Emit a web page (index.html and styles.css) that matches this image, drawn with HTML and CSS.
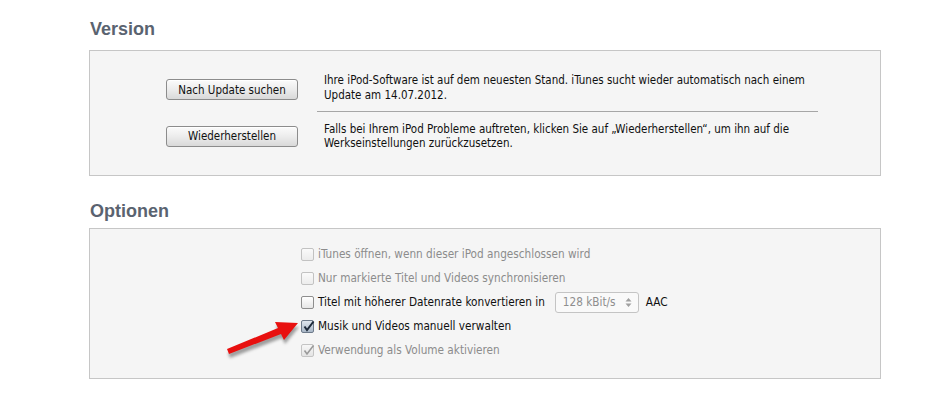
FILE: index.html
```html
<!DOCTYPE html>
<html lang="de">
<head>
<meta charset="utf-8">
<link rel="stylesheet" href="styles.css">
</head>
<body>
<div class="page">
  <h2 class="heading">Version</h2>
  <div class="box version">
    <div class="vgrid">
      <div class="btncol r1"><button class="btn">Nach Update suchen</button></div>
      <p class="vtext r1">Ihre iPod-Software ist auf dem neuesten Stand. iTunes sucht wieder automatisch nach einem Update am 14.07.2012.</p>
      <div class="sep"></div>
      <div class="btncol r3"><button class="btn">Wiederherstellen</button></div>
      <p class="vtext r3">Falls bei Ihrem iPod Probleme auftreten, klicken Sie auf „Wiederherstellen“, um ihn auf die Werkseinstellungen zurückzusetzen.</p>
    </div>
  </div>

  <h2 class="heading h-opt">Optionen</h2>
  <div class="box options">
    <ul class="opts">
      <li class="opt disabled"><span class="cb"></span><span>iTunes öffnen, wenn dieser iPod angeschlossen wird</span></li>
      <li class="opt disabled"><span class="cb"></span><span>Nur markierte Titel und Videos synchronisieren</span></li>
      <li class="opt"><span class="cb"></span><span>Titel mit höherer Datenrate konvertieren in</span><span class="select"><span>128 kBit/s</span><svg class="updown" width="7" height="11" viewBox="0 0 7 11"><path d="M3.5 1 L6.5 4.5 H0.5Z M3.5 10 L6.5 6.5 H0.5Z" fill="#a0a0a0"/></svg></span><span>AAC</span></li>
      <li class="opt"><span class="cb checked"><svg width="13" height="13" viewBox="0 0 13 13"><path d="M2.5 6.5 L5 10 L11.5 1.5" fill="none" stroke="#1e2a3a" stroke-width="2"/></svg></span><span>Musik und Videos manuell verwalten</span></li>
      <li class="opt disabled"><span class="cb checked dis"><svg width="13" height="13" viewBox="0 0 13 13"><path d="M2.5 6.5 L5 10 L11.5 1.5" fill="none" stroke="#9a9a9a" stroke-width="1.6"/></svg></span><span>Verwendung als Volume aktivieren</span></li>
    </ul>
    <svg class="arrow" width="90" height="50" viewBox="0 0 90 50">
      <defs>
        <filter id="sh" x="-20%" y="-20%" width="150%" height="160%">
          <feGaussianBlur stdDeviation="1.6"/>
        </filter>
      </defs>
      <g transform="translate(1,4)" fill="#555" opacity="0.55" filter="url(#sh)">
        <path d="M1 32 L52 11 L49 5 L72 6 L58 23 L55 17 L3 37 Z"/>
      </g>
      <path d="M1 32 L52 11 L49 5 L72 6 L58 23 L55 17 L3 37 Z" fill="#e8100f"/>
    </svg>
  </div>
</div>
</body>
</html>
```
FILE: styles.css
```css
html, body {
  margin: 0;
  padding: 0;
  background: #ffffff;
}
.page {
  padding: 0 51px 0 89px;
  font-family: "DejaVu Sans Condensed", "Liberation Sans", sans-serif;
  font-size: 11.5px;
  color: #101010;
}
.heading {
  margin: 0;
  padding: 19px 0 0 1px;
  height: 50px;
  box-sizing: border-box;
  font-family: "Liberation Sans", Arial, sans-serif;
  font-weight: bold;
  font-size: 18px;
  line-height: 20px;
  color: #5a6370;
}
.h-opt {
  padding-top: 25px;
  height: 52px;
}
.box {
  border: 1px solid #c6c6c6;
  background: #f5f5f5;
  box-sizing: border-box;
  position: relative;
}
.version {
  height: 126px;
  padding-top: 16px;
}
.vgrid {
  display: grid;
  grid-template-columns: 227px 501px;
  grid-template-rows: 44px 1px 48px;
}
.btncol {
  grid-column: 1;
  display: flex;
  align-items: center;
  justify-content: flex-end;
  padding-right: 19px;
}
.r1 { grid-row: 1; }
.r3 { grid-row: 3; }
.sep {
  grid-column: 2;
  grid-row: 2;
  background: #a6a6a6;
}
.btn {
  width: 132px;
  height: 21px;
  border: 1px solid #8c8c8c;
  border-radius: 3px;
  background: linear-gradient(#fbfbfb, #ececec 50%, #d9d9d9);
  font-family: inherit;
  font-size: 11.5px;
  color: #111;
  padding: 0;
  box-shadow: inset 0 1px 0 #fff;
}
.btncol.r1 .btn { margin-top: 1px; }
.vtext {
  grid-column: 2;
  align-self: center;
  margin: 0;
  padding-left: 7px;
  line-height: 14.5px;
}
.vtext.r1 { margin-top: -3px; }
.options {
  height: 151px;
  padding-top: 13px;
}
.opts {
  list-style: none;
  margin: 0;
  padding: 0 0 0 211px;
}
.opt {
  display: flex;
  align-items: center;
  height: 24px;
  white-space: nowrap;
  font-size: 11.7px;
}
.opt.disabled {
  color: #8c8c8c;
}
.cb {
  width: 13px;
  height: 13px;
  box-sizing: border-box;
  border: 1px solid #8e8e8e;
  border-radius: 2px;
  background: linear-gradient(#ffffff, #e6e6e6);
  margin-right: 4px;
  position: relative;
  flex: none;
}
.opt.disabled .cb {
  border-color: #c2c2c2;
  background: linear-gradient(#fafafa, #ececec);
}
.cb.checked {
  background: linear-gradient(#dfe6ee, #a9b7c7);
  border-color: #6d7a8a;
}
.opt.disabled .cb.checked.dis {
  background: linear-gradient(#f7f7f7, #e4e4e4);
  border-color: #c4c4c4;
}
.cb svg {
  position: absolute;
  left: 0;
  top: -1px;
}
.select {
  display: inline-flex;
  align-items: center;
  justify-content: space-between;
  width: 84px;
  height: 21px;
  box-sizing: border-box;
  border: 1px solid #c4c4c4;
  border-radius: 3px;
  background: #f9f9f9;
  color: #8e8e8e;
  padding: 0 6px 0 7px;
  margin: 0 7px 0 10px;
}
.arrow {
  position: absolute;
  left: 136px;
  top: 88px;
}
```
